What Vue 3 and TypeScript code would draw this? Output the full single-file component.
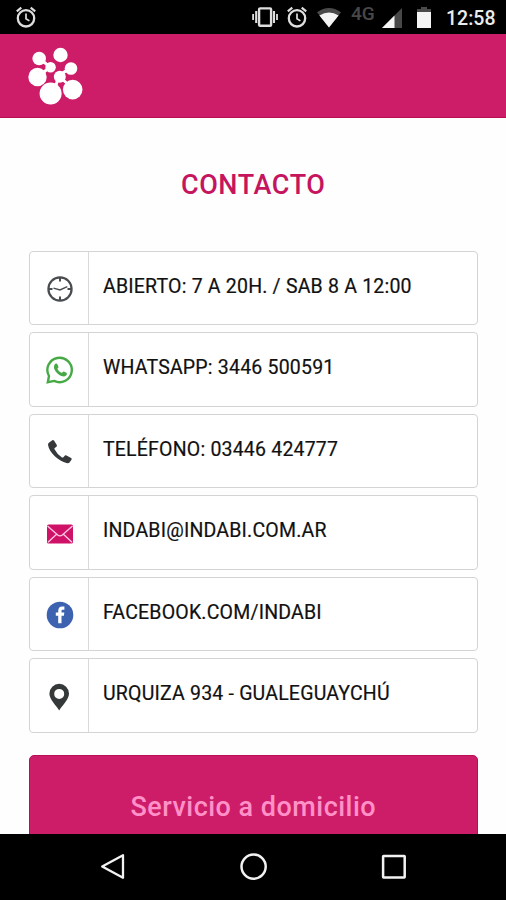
<script setup lang="ts">
type IconName = 'clock' | 'whatsapp' | 'phone' | 'mail' | 'facebook' | 'pin'

interface ContactRow {
  icon: IconName
  label: string
}

const rows: ContactRow[] = [
  { icon: 'clock', label: 'ABIERTO: 7 A 20H. / SAB 8 A 12:00' },
  { icon: 'whatsapp', label: 'WHATSAPP: 3446 500591' },
  { icon: 'phone', label: 'TELÉFONO: 03446 424777' },
  { icon: 'mail', label: 'INDABI@INDABI.COM.AR' },
  { icon: 'facebook', label: 'FACEBOOK.COM/INDABI' },
  { icon: 'pin', label: 'URQUIZA 934 - GUALEGUAYCHÚ' },
]
</script>

<template>
  <div class="screen">
    <div class="status">
      <svg class="alarm" width="20" height="22" viewBox="0 0 20 22" fill="none" stroke="#dedede">
        <circle cx="10" cy="12.300" r="8.200" stroke-width="2.3" />
        <path d="M10 7.5v5.2l3.4 2.2" stroke-width="1.7" />
        <path d="M.8 5.3 5.3 1.7M19.200 5.3 14.7 1.7" stroke-width="2.2" />
      </svg>
      <div class="tray">
        <svg class="vibrate" width="26" height="20" viewBox="0 0 26 20" fill="none" stroke="#dedede">
          <rect x="7.1" y="1.4" width="12" height="17.4" rx="1" stroke-width="2.4" />
          <path d="M4.2 4v12M22 4v12" stroke-width="2.1" />
          <path d="M1.1 7v6M25 7v6" stroke-width="1.8" />
        </svg>
        <svg class="alarm2" width="20" height="22" viewBox="0 0 20 22" fill="none" stroke="#dedede">
          <circle cx="10" cy="12.300" r="8.200" stroke-width="2.3" />
          <path d="M10 7.5v5.2l3.4 2.2" stroke-width="1.7" />
          <path d="M.8 5.3 5.3 1.7M19.200 5.3 14.7 1.7" stroke-width="2.2" />
        </svg>
        <svg class="wifi" width="24" height="20" viewBox="0 0 24 20">
          <path d="M0 4.3Q12-4.3 24 4.3L12 19.5Z" fill="#4a4a4a" />
          <path d="M2.4 7.4Q12 1.6 21.600 7.4L12 19.5Z" fill="#f4f4f4" />
        </svg>
        <span class="network">4G</span>
        <svg class="signal" width="20" height="20" viewBox="0 0 20 20">
          <path d="M20 0V20H0Z" fill="#484848" />
          <path d="M12.5 7.5V20H0Z" fill="#f6f6f6" />
        </svg>
        <svg class="battery" width="14" height="21" viewBox="0 0 14 21">
          <path d="M4 0h6v2h4v4H0V2h4Z" fill="#4a4a4a" />
          <path d="M0 5h14v16H0Z" fill="#f4f4f4" />
        </svg>
        <span class="time">12:58</span>
      </div>
    </div>

    <header class="appbar">
      <svg width="56" height="60" viewBox="0 0 56 60" fill="#fff">
        <path d="M11 11 22 20 10 30M43 20 31 29 26 44M31 29 45 42" fill="none" stroke="#fff" stroke-width="3" />
        <circle cx="11.200" cy="11.5" r="6.8" />
        <circle cx="32.5" cy="8" r="7.2" />
        <circle cx="22.6" cy="20.300" r="5.2" />
        <circle cx="43" cy="21.500" r="6.3" />
        <circle cx="9.500" cy="30" r="9.200" />
        <circle cx="31.8" cy="29.8" r="6" />
        <circle cx="22.600" cy="46.500" r="11" />
        <circle cx="44.7" cy="42.600" r="9.800" />
      </svg>
    </header>

    <main class="content">
      <h1 class="title">CONTACTO</h1>

      <div class="list">
        <div v-for="row in rows" :key="row.icon" class="card">
          <div class="cell">
            <svg v-if="row.icon === 'clock'" width="28" height="28" viewBox="0 0 28 28" fill="none" stroke="#4a4d50">
              <circle cx="14" cy="14" r="11.6" stroke-width="2.200" />
              <path d="M14 2.5v4M14 21.5v4M2.5 14h4M21.5 14h4" stroke-width="2" />
              <path d="M7.5 13.2 14 15l7.3-3.4" stroke-width="1.4" />
            </svg>
            <svg v-else-if="row.icon === 'whatsapp'" width="28" height="28" viewBox="0 0 28 28">
              <path d="M1.800 26.2 3 20A12.200 12.200 0 1 1 8.2 24.9Z" fill="none" stroke="#45aa45" stroke-width="2.4" />
              <path d="M8.3 9.2c.5-1.3 1.5-1.9 2.6-1.5.5.2 1.5 2.6 1.6 3.2.1.7-1.2 1.5-1 2.1.8 1.7 2.2 3 4 3.8.7.2 1.5-1.6 2.2-1.4.7.2 2.7 1.200 3.100 1.600.5.7-.2 2.500-1.500 3.100-1.700.8-4.200 0-6.300-1.400-2.400-1.600-4.300-4-4.900-6.100-.3-1.200-.2-2.400.2-3.400Z" fill="#45aa45" />
            </svg>
            <svg v-else-if="row.icon === 'phone'" width="28" height="28" viewBox="0 0 28 28" fill="#35393b">
              <path d="M3.200 4.500 6.300 2.200Q7.300 1.700 8 2.600L10.800 7Q11.300 8 10.400 8.700L8.700 10Q8.200 10.500 8.500 11.300 11 16.300 16 19.400 16.800 19.800 17.400 19.200L18.900 17.600Q19.600 17 20.500 17.500L25.100 20Q26.200 20.700 25.500 21.800L23.500 24.600Q22.600 25.500 20.500 25.100C13 23.500 3 14.500 2 6.800Q1.900 5.400 3.200 4.500Z" />
            </svg>
            <svg v-else-if="row.icon === 'mail'" width="28" height="28" viewBox="0 0 28 28">
              <rect x="1" y="4.500" width="26" height="19" rx="1.500" fill="#cf1268" />
              <path d="M1.500 6 11.700 15Q14 16.800 16.300 15L26.500 6M2 22.300 10.300 14.500M26 22.300 17.700 14.500" fill="none" stroke="#ffc4e0" stroke-width="1.400" />
            </svg>
            <svg v-else-if="row.icon === 'facebook'" width="28" height="28" viewBox="0 0 28 28">
              <circle cx="14" cy="14" r="13.300" fill="#3d62b0" />
              <path d="M12.200 22.300V14.800H9.800V11.600h2.400V9.800c0-2.900 1.600-4.300 4-4.300h2.200v3.200h-1.500c-1.100 0-1.400.5-1.400 1.500v1.400h2.800l-.4 3.200h-2.400v7.500Z" fill="#fff" />
            </svg>
            <svg v-else width="28" height="28" viewBox="0 0 28 28">
              <path d="M13.200 .8A9.800 9.800 0 0 0 3.400 10.600C3.400 16.500 9.700 22 13.200 27.500 16.700 22 23 16.500 23 10.600A9.800 9.800 0 0 0 13.200 .8Zm0 5.100a5 5 0 1 1 0 10 5 5 0 0 1 0-10Z" fill="#35393a" fill-rule="evenodd" />
            </svg>
          </div>
          <span class="label">{{ row.label }}</span>
        </div>
      </div>

      <button class="cta" type="button">Servicio a domicilio</button>
    </main>

    <nav class="navbar">
      <svg width="28" height="28" viewBox="0 0 28 28" fill="none" stroke="#f2f2f2" stroke-width="2.300" stroke-linejoin="round">
        <path d="M24 2.200V24.800L3.200 13.500Z" />
      </svg>
      <svg width="28" height="28" viewBox="0 0 28 28" fill="none" stroke="#f2f2f2" stroke-width="2.500">
        <circle cx="13.600" cy="13.600" r="12.100" />
      </svg>
      <svg width="28" height="28" viewBox="0 0 28 28" fill="none" stroke="#f2f2f2" stroke-width="2.500">
        <rect x="3.100" y="3.100" width="21.600" height="21.400" rx=".5" />
      </svg>
    </nav>
  </div>
</template>

<style>
body {
  margin: 0;
  background: #fff;
}
</style>

<style scoped>
.screen {
  display: flex;
  flex-direction: column;
  width: 506px;
  height: 900px;
  overflow: hidden;
  background: #fefefe;
  font-family: Roboto, 'Liberation Sans', sans-serif;
}
svg {
  display: block;
  flex: none;
}
.status {
  flex: none;
  display: flex;
  justify-content: space-between;
  box-sizing: border-box;
  height: 34px;
  padding: 6px 11px 0 16px;
  background: #000;
}
.tray {
  display: flex;
  align-items: flex-start;
}
.vibrate {
  margin: 1px 9px 0 0;
}
.alarm2 {
  margin-right: 10px;
}
.wifi {
  margin: 2px 10px 0 0;
}
.network {
  width: 24px;
  margin-right: 7px;
  color: #484848;
  font-size: 19px;
  font-weight: 500;
  line-height: 15px;
  white-space: nowrap;
}
.signal {
  margin: 2px 15px 0 0;
}
.battery {
  margin: 1px 15px 0 0;
}
.time {
  width: 49px;
  color: #ececec;
  font-size: 19.500px;
  font-weight: 500;
  line-height: 25px;
  white-space: nowrap;
}
.appbar {
  flex: none;
  box-sizing: border-box;
  height: 84px;
  padding: 13px 28px;
  background: #cd1d68;
  border-bottom: 1px solid #b90f55;
}
.content {
  flex: 1;
  min-height: 0;
  overflow: hidden;
  padding: 0 28px 0 28.500px;
}
.title {
  margin: 0;
  padding-top: 50px;
  color: #c5155f;
  font-size: 27px;
  font-weight: 500;
  letter-spacing: 0.6px;
  line-height: 34px;
  text-align: center;
}
.list {
  display: grid;
  gap: 7.100px;
  margin-top: 48.500px;
}
.card {
  display: flex;
  box-sizing: border-box;
  height: 74.500px;
  border: 1px solid #d4d4d4;
  border-radius: 4px;
  background: #fff;
}
.cell {
  display: flex;
  align-items: center;
  justify-content: center;
  box-sizing: border-box;
  width: 59.500px;
  padding-top: 2px;
  padding-left: 2px;
  border-right: 1px solid #dadada;
}
.label {
  padding-left: 14px;
  color: #111;
  font-size: 19.500px;
  letter-spacing: 0.2px;
  line-height: 70px;
  white-space: nowrap;
  -webkit-text-stroke: 0.2px #111;
}
.cta {
  display: block;
  width: 100%;
  height: 104px;
  margin-top: 22px;
  padding: 0;
  border: 1px solid #b90f55;
  border-radius: 5px;
  background: #cd1d68;
  color: #ff91c8;
  font-family: inherit;
  font-size: 27px;
  font-weight: 500;
  letter-spacing: 0.48px;
  line-height: 30px;
}
.navbar {
  flex: none;
  display: flex;
  justify-content: center;
  align-items: center;
  gap: 112.500px;
  height: 66px;
  padding-left: 1px;
  background: #000;
}
</style>
